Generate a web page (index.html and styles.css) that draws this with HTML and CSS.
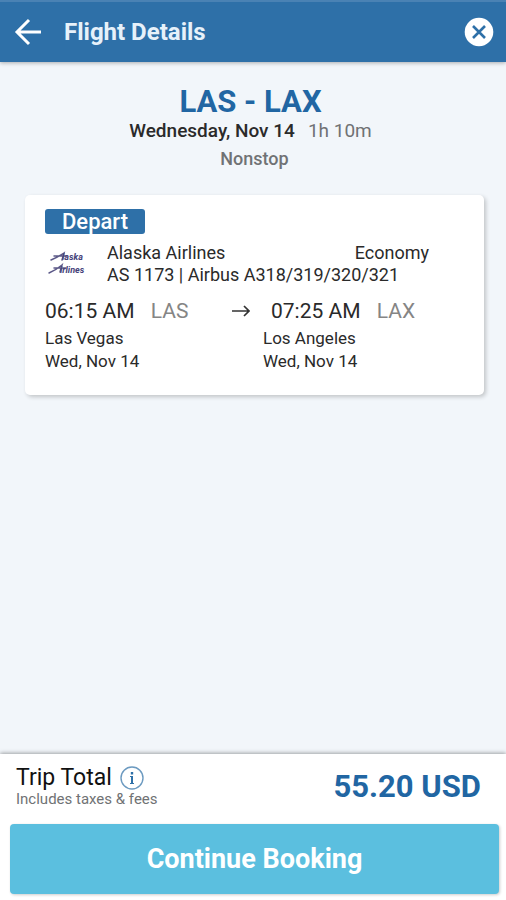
FILE: index.html
```html
<!DOCTYPE html>
<html lang="en">

<head>
    <meta charset="UTF-8">
    <meta name="viewport" content="width=device-width, initial-scale=1.0">
    <link rel="stylesheet" href="styles.css">
    <title>Flight Details</title>
</head>

<body>
    <header class="topbar">
        <button class="icon-button" type="button" aria-label="Back">
            <svg width="28" height="28" viewBox="0 0 28 28" fill="none" stroke="#fff" stroke-width="3">
                <path d="M27 14H3M15 2L3 14l12 12" />
            </svg>
        </button>
        <h1>Flight Details</h1>
        <button class="icon-button" type="button" aria-label="Close">
            <svg width="30" height="30" viewBox="0 0 30 30">
                <circle cx="15" cy="15" r="14.3" fill="#fff" />
                <path d="M9 9l12 12M21 9L9 21" stroke="#2e70a8" stroke-width="2.6" />
            </svg>
        </button>
    </header>

    <main class="content">
        <section class="summary">
            <div class="trip">
                <h2>LAS - LAX</h2>
                <p><strong>Wednesday, Nov 14</strong><span class="duration">1h 10m</span></p>
            </div>
            <p class="stops">Nonstop</p>
        </section>

        <section class="card">
            <div class="card-body">
                <h3 class="badge">Depart</h3>
                <div class="airline">
                    <svg class="airline-logo" width="42" height="30" viewBox="0 0 42 30" role="img" aria-label="Alaska Airlines">
                        <g fill="none" stroke="#5c5988" stroke-linecap="round">
                            <path d="M6 11Q13 8 19 4L17 11M9 7H22" stroke-width="1.5" />
                            <path d="M4 24Q11 21 17 16L15 23M9 19H21" stroke-width="1.5" />
                        </g>
                        <text x="17" y="11">laska</text>
                        <text x="15" y="24">irlines</text>
                    </svg>
                    <div class="airline-info">
                        <div class="airline-name"><span>Alaska Airlines</span><span>Economy</span></div>
                        <div>AS 1173 | Airbus A318/319/320/321</div>
                    </div>
                </div>
                <div class="route">
                    <div class="stop">
                        <div class="time">06:15 AM <span class="code">LAS</span></div>
                        <div>Las Vegas</div>
                        <div>Wed, Nov 14</div>
                    </div>
                    <svg class="arrow" width="18" height="14" viewBox="0 0 18 14" fill="none" stroke="#333" stroke-width="1.7">
                        <path d="M0 7H16M12 2l5 5-5 5" />
                    </svg>
                    <div class="stop">
                        <div class="time arrival">07:25 AM <span class="code">LAX</span></div>
                        <div>Los Angeles</div>
                        <div>Wed, Nov 14</div>
                    </div>
                </div>
            </div>
        </section>
    </main>

    <footer class="checkout">
        <div class="total">
            <div>
                <div class="total-label">
                    Trip Total
                    <button class="icon-button" type="button" aria-label="Price information">
                        <svg width="24" height="24" viewBox="0 0 24 24" fill="none" stroke="#6c9ac0">
                            <circle cx="12" cy="12" r="11" stroke-width="1.4" />
                            <path d="M12 6v2.5" stroke="#2e70a8" stroke-width="2.4" />
                            <path d="M10 10.5h2v7M10 17.5h4" stroke="#2e70a8" stroke-width="1" />
                            <path d="M12 10v7" stroke="#2e70a8" stroke-width="2" />
                        </svg>
                    </button>
                </div>
                <div class="note">Includes taxes &amp; fees</div>
            </div>
            <div class="price">55.20 USD</div>
        </div>
        <button class="continue" type="button">Continue Booking</button>
    </footer>
</body>

</html>
```

FILE: styles.css
```css
/* Reset and global styles */
* {
    box-sizing: border-box;
}

body {
    font-family: Roboto, sans-serif;
    margin: 0;
    background-color: #f2f6fa;
    color: #2a2a2a;
    display: flex;
    flex-direction: column;
    min-height: 100vh;
}

h1,
h2,
h3,
p {
    margin: 0;
    font-weight: 500;
}

button {
    font-family: inherit;
    border: 0;
    cursor: pointer;
}

.icon-button {
    display: flex;
    padding: 0;
    background: none;
}

/* Top bar */
.topbar {
    display: flex;
    align-items: center;
    height: 62px;
    padding: 0 12px 0 14px;
    background-color: #2e70a8;
    border-top: 2px solid #4a82b4;
    box-shadow: 0 1px 4px rgba(0, 0, 0, 0.3);
    color: #e6f1fa;
}

.topbar h1 {
    flex: 1;
    margin-left: 22px;
    font-size: 24px;
    font-weight: 700;
}

/* Trip summary */
.content {
    flex: 1;
    padding: 23px 22px 22px 25px;
}

.summary {
    text-align: center;
    font-size: 18px;
    line-height: 24px;
}

.trip {
    padding-right: 8px;
    font-size: 19px;
}

.summary h2 {
    color: #2166a3;
    font-size: 31px;
    font-weight: 700;
    line-height: 34px;
}

.summary strong {
    font-weight: 500;
}

.duration {
    margin-left: 13px;
    color: #707274;
    font-weight: 400;
}

.stops {
    margin-top: 4px;
    color: #707274;
}

/* Flight card */
.card {
    margin-top: 24px;
    min-height: 200px;
    padding: 14px 20px;
    background-color: #fff;
    border-radius: 5px;
    box-shadow: 2px 2px 4px rgba(0, 0, 0, 0.2);
}

.badge {
    width: 100px;
    border-radius: 3px;
    background-color: #2e70a8;
    color: #fff;
    font-size: 22px;
    line-height: 25px;
    text-align: center;
}

.airline {
    display: flex;
    align-items: center;
    gap: 20px;
    margin-top: 8px;
    font-size: 18px;
    line-height: 22px;
}

.airline-logo {
    flex: none;
    fill: #454279;
    font-size: 9px;
    font-style: italic;
    font-weight: 700;
}

.airline-info {
    flex: 1;
}

.airline-name {
    display: flex;
    justify-content: space-between;
    padding-right: 35px;
}

.route {
    display: grid;
    grid-template-columns: 187px 31px 1fr;
    margin-top: 9px;
    font-size: 17px;
    line-height: 23px;
}

.time {
    font-size: 21px;
    line-height: 32px;
}

.arrival {
    margin-left: 8px;
}

.code {
    margin-left: 11px;
    color: #858585;
}

.arrow {
    margin-top: 9px;
}

/* Total and booking button */
.checkout {
    padding: 12px 7px 6px 10px;
    background-color: #fff;
    box-shadow: 0 -1px 4px rgba(0, 0, 0, 0.35);
}

.total {
    display: flex;
    align-items: center;
    justify-content: space-between;
    padding: 0 18px 0 6px;
}

.total-label {
    display: flex;
    align-items: center;
    gap: 8px;
    color: #111;
    font-size: 23px;
    line-height: 24px;
}

.note {
    color: #707274;
    font-size: 15px;
    line-height: 18px;
}

.price {
    color: #2166a3;
    font-size: 31px;
    font-weight: 700;
    line-height: 40px;
}

.continue {
    display: block;
    width: 100%;
    height: 70px;
    margin-top: 16px;
    border-radius: 4px;
    background-color: #5bbfdf;
    box-shadow: 1px 1px 3px rgba(0, 0, 0, 0.2);
    color: #fff;
    font-size: 27px;
    font-weight: 700;
}
```
